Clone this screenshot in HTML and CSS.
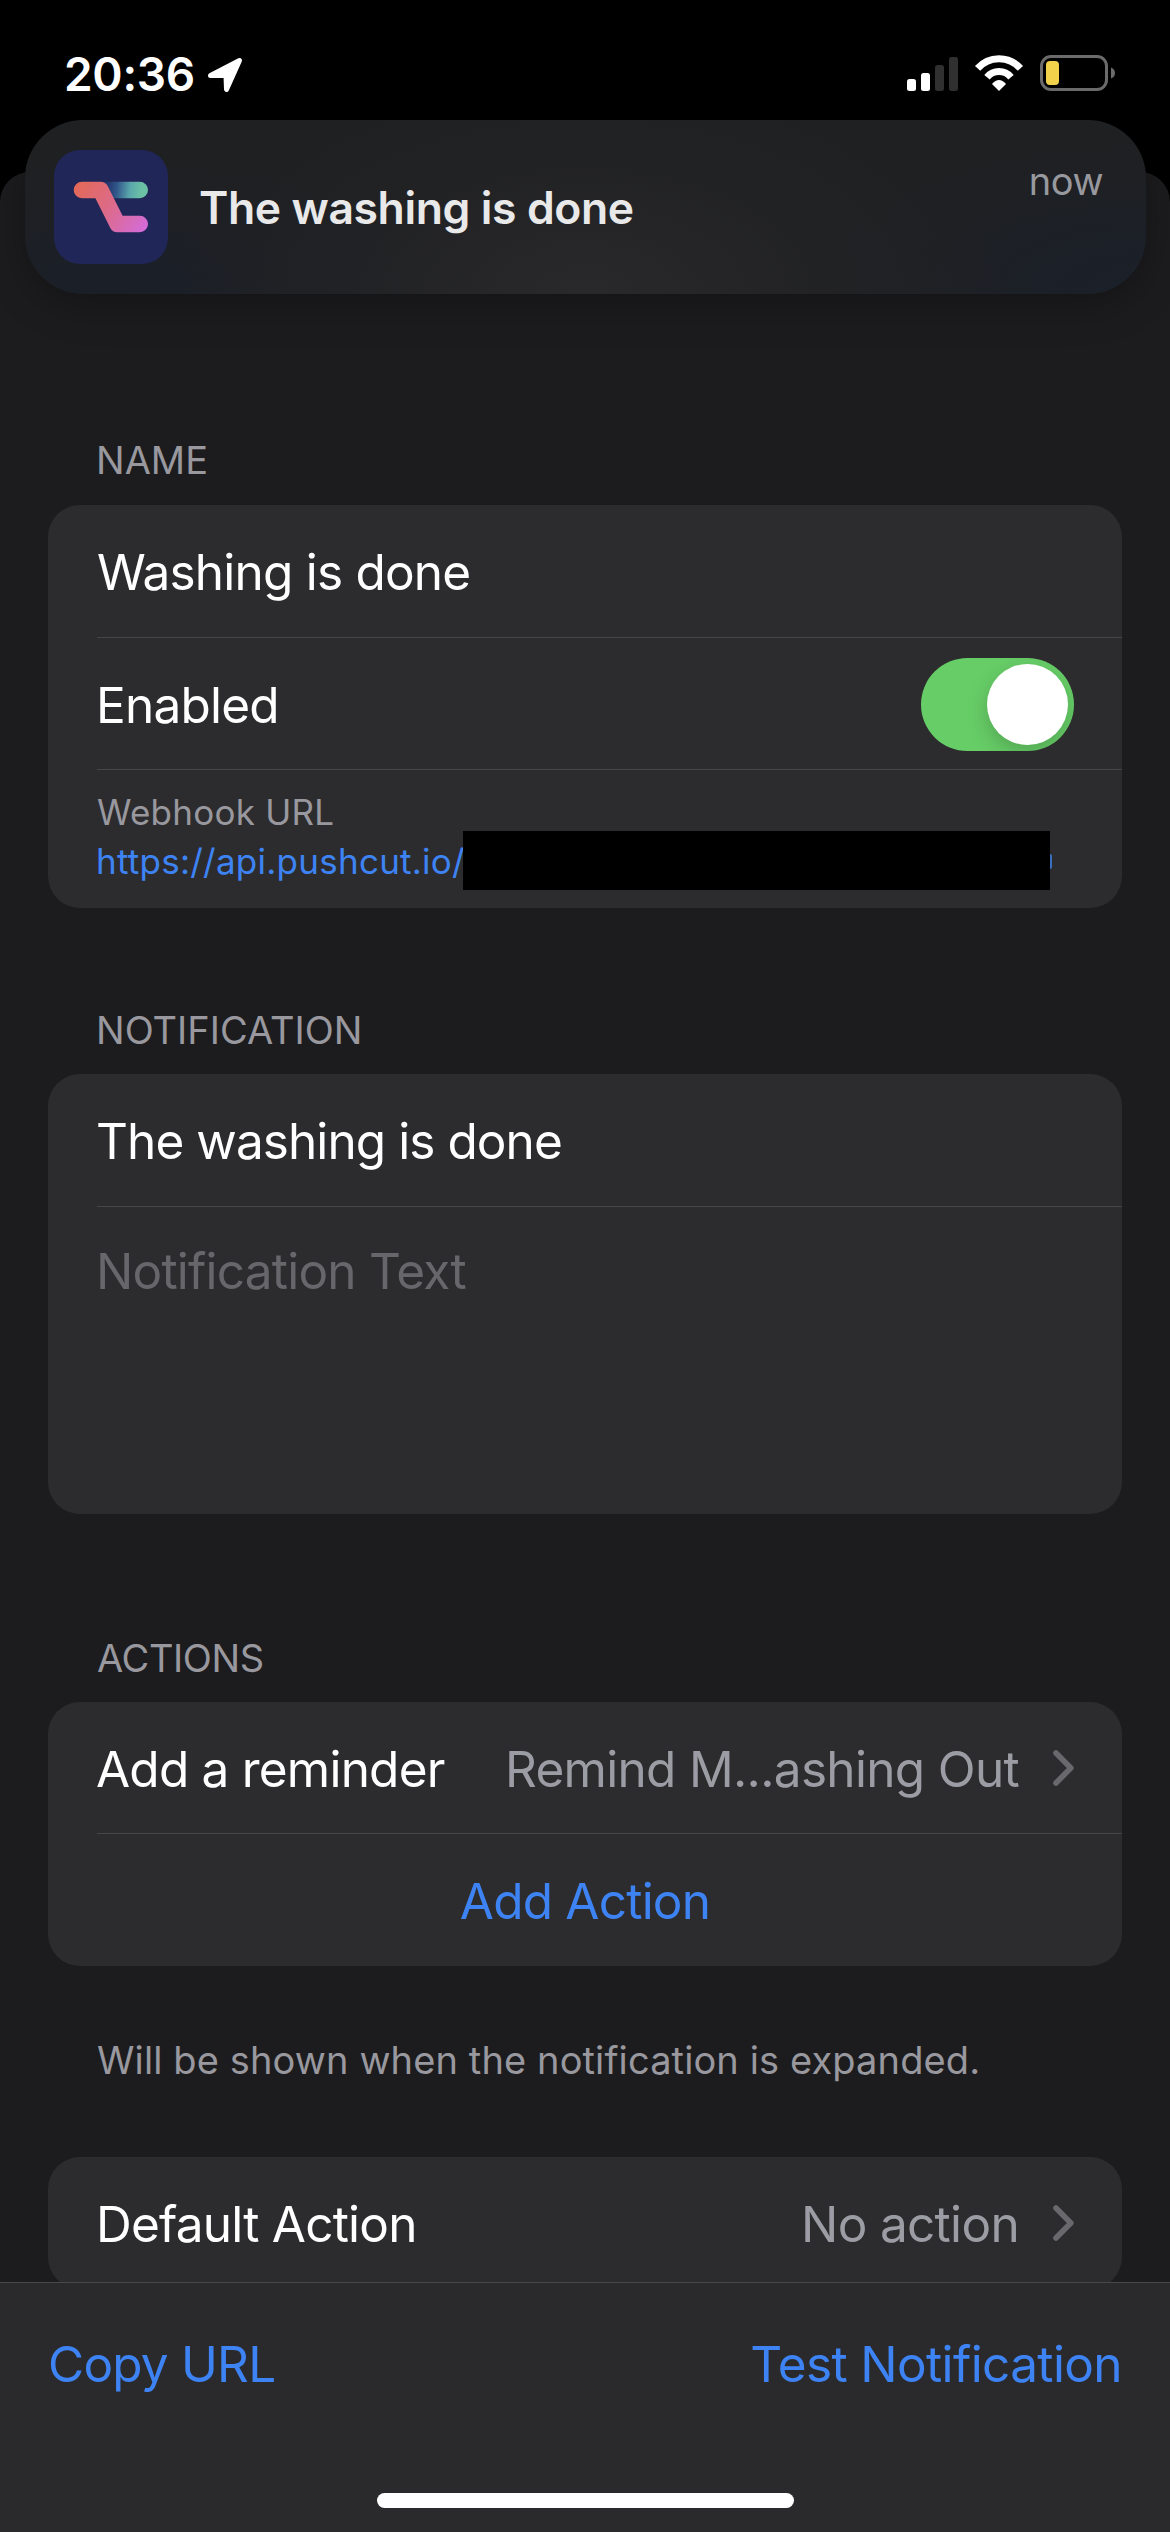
FILE: index.html
```html
<!DOCTYPE html>
<html lang="en">
<head>
<meta charset="utf-8">
<title>Washing is done</title>
<link rel="stylesheet" href="styles.css">
</head>
<body>
<div class="phone">
  <header class="status">
    <div class="status-left">
      <span class="time">20:36</span>
      <svg class="location" width="38" height="38" viewBox="0 0 38 38"><path d="M4.500 19.500 L33.500 4.500 L20.500 33.500 L20 19.500Z" fill="#fff" stroke="#fff" stroke-width="5" stroke-linejoin="round"/></svg>
    </div>
    <div class="status-right">
      <svg width="51" height="36" viewBox="0 0 51 36">
        <rect x="0" y="24" width="9" height="12" rx="2.500" fill="#fff"/>
        <rect x="14" y="18" width="9" height="18" rx="2.500" fill="#fff"/>
        <rect x="28" y="10" width="9" height="26" rx="2.500" fill="#303030"/>
        <rect x="42" y="2" width="9" height="34" rx="2.500" fill="#303030"/>
      </svg>
      <svg width="50" height="36" viewBox="0 0 50 36">
        <g fill="none" stroke="#fff" stroke-width="7">
          <path d="M3.600 13.400A28.400 28.400 0 0 1 46.400 13.400"/>
          <path d="M13 22.200A15.600 15.600 0 0 1 37 22.200"/>
        </g>
        <path d="M25 36L18 29Q25 21 32 29Z" fill="#fff"/>
      </svg>
      <svg width="76" height="36" viewBox="0 0 76 36">
        <rect x="1.500" y="1.500" width="65" height="33" rx="9.500" fill="none" stroke="#6b6b6b" stroke-width="3"/>
        <rect x="6" y="6" width="13" height="24" rx="4" fill="#f2d24b"/>
        <path d="M71 12.500Q75 14 75 18T71 23.500Z" fill="#6b6b6b"/>
      </svg>
    </div>
  </header>

  <main class="sheet">
    <section>
      <h2>NAME</h2>
      <div class="card">
        <div class="row">Washing is done</div>
        <div class="row">
          <span>Enabled</span>
          <span class="toggle"><span class="knob"></span></span>
        </div>
        <div class="row webhook">
          <div class="small">Webhook URL</div>
          <div class="url"><span class="small link">https://api.pushcut.io/</span><span class="redacted"></span><span class="edge"></span></div>
        </div>
      </div>
    </section>

    <section class="notification">
      <h2>NOTIFICATION</h2>
      <div class="card">
        <div class="row"><span class="title">The washing is done</span></div>
        <div class="row placeholder"><span>Notification Text</span></div>
      </div>
    </section>

    <section class="actions">
      <h2 class="flush">ACTIONS</h2>
      <div class="card">
        <div class="row">
          <span>Add a reminder</span>
          <span class="value">Remind M...ashing Out<svg class="chevron" width="24" height="38" viewBox="0 0 24 38"><path d="M4 4L18.800 19L4 34" fill="none" stroke="#68686d" stroke-width="5.600" stroke-linecap="round" stroke-linejoin="round"/></svg></span>
        </div>
        <div class="row add link">Add Action</div>
      </div>
      <p>Will be shown when the notification is expanded.</p>
    </section>

    <section class="default">
      <div class="card">
        <div class="row">
          <span>Default Action</span>
          <span class="value">No action<svg class="chevron" width="24" height="38" viewBox="0 0 24 38"><path d="M4 4L18.800 19L4 34" fill="none" stroke="#68686d" stroke-width="5.600" stroke-linecap="round" stroke-linejoin="round"/></svg></span>
        </div>
      </div>
    </section>
  </main>

  <footer class="toolbar">
    <div class="buttons"><span>Copy URL</span><span class="test">Test Notification</span></div>
    <div class="home"></div>
  </footer>

  <aside class="banner">
    <svg class="logo" width="114" height="114" viewBox="0 0 114 114">
      <defs>
        <linearGradient id="teal" gradientUnits="userSpaceOnUse" x1="54" y1="38" x2="88" y2="42"><stop offset="0" stop-color="#24386f"/><stop offset=".25" stop-color="#31568a"/><stop offset=".65" stop-color="#5ba8ac"/><stop offset="1" stop-color="#6cc2a4"/></linearGradient>
        <linearGradient id="pink" gradientUnits="userSpaceOnUse" x1="24" y1="36" x2="90" y2="80"><stop offset="0" stop-color="#e2695a"/><stop offset=".5" stop-color="#dc6b8c"/><stop offset="1" stop-color="#d46bd8"/></linearGradient>
      </defs>
      <rect width="114" height="114" rx="26" fill="#202657"/>
      <path d="M50 40H85.800" stroke="url(#teal)" stroke-width="16.400" stroke-linecap="round"/>
      <path d="M27.900 40H46.500L63.500 74H85.800" fill="none" stroke="url(#pink)" stroke-width="16.400" stroke-linecap="round" stroke-linejoin="round"/>
    </svg>
    <strong>The washing is done</strong>
    <span class="when">now</span>
  </aside>
</div>
</body>
</html>
```
FILE: styles.css
```css
* {
  box-sizing: border-box;
}

body {
  margin: 0;
  background: #000;
}

.phone {
  position: relative;
  display: flex;
  flex-direction: column;
  width: 1170px;
  height: 2532px;
  overflow: hidden;
  background: #000;
  color: #fff;
  font: 400 49.5px/60px Inter, sans-serif;
  letter-spacing: -0.78px;
  white-space: nowrap;
}

/* Status bar */
.status {
  display: flex;
  justify-content: space-between;
  height: 172px;
  padding: 46px 54px 0 64px;
}

.status-left,
.status-right {
  display: flex;
  align-items: flex-start;
}

.status-left {
  gap: 11px;
}

.time {
  font-size: 46px;
  font-weight: 600;
  line-height: 56px;
  letter-spacing: -0.3px;
}

.location {
  margin-top: 10px;
}

.status-right {
  gap: 16px;
  padding-top: 9px;
}

/* Scrolling sheet */
.sheet {
  flex: 1;
  min-height: 0;
  overflow: hidden;
  padding: 265px 48px 0;
  border-radius: 30px 30px 0 0;
  background: #1c1c1e;
}

h2,
p {
  margin: 0;
  color: #98989e;
  font-size: 38px;
  font-weight: 400;
  line-height: 46px;
}

h2 {
  margin: 0 0 22px 48px;
  letter-spacing: 0;
}

h2.flush {
  margin-left: 49px;
  letter-spacing: -0.4px;
}

p {
  margin: 71px 0 0 49px;
  letter-spacing: 0.12px;
}

.card {
  overflow: hidden;
  border-radius: 32px;
  background: #2c2c2e;
}

.row {
  display: flex;
  align-items: center;
  justify-content: space-between;
  height: 132px;
  margin-left: 49px;
  padding: 2px 48px 0 0;
}

.row + .row {
  border-top: 1px solid #464649;
}

.row > span:first-child {
  margin-left: -1px;
}

.title {
  letter-spacing: -0.92px;
}

.toggle {
  display: flex;
  justify-content: flex-end;
  width: 153px;
  height: 93px;
  padding: 6px;
  border-radius: 47px;
  background: #67ce67;
  overflow: hidden;
}

.knob {
  width: 81px;
  height: 81px;
  border-radius: 50%;
  background: #fff;
  box-shadow: 0 8px 22px rgba(0, 0, 0, 0.2);
}

.row.webhook {
  display: block;
  height: 139px;
  padding: 18px 0 0;
}

.small {
  font-size: 35px;
  line-height: 49px;
  letter-spacing: 0.25px;
}

.webhook > .small {
  color: #98989e;
}

.link {
  color: #3e83f3;
}

.url {
  display: flex;
  align-items: center;
  height: 49px;
}

.url .link {
  width: 367px;
  margin-left: -1px;
}

.redacted {
  flex: none;
  width: 587px;
  height: 59px;
  margin: -7px 0 -5px;
  background: #000;
}

.edge {
  width: 2px;
  height: 15px;
  border-radius: 0 2px 2px 0;
  background: #3a6fc0;
}

.notification {
  margin-top: 99px;
}

.notification h2,
.actions h2 {
  margin-bottom: 21px;
}

.row.placeholder {
  align-items: flex-start;
  height: 308px;
  padding-top: 34px;
  color: #67676b;
}

.actions {
  margin-top: 121px;
}

.actions .row {
  height: 131px;
}

.actions .row.add {
  justify-content: center;
  height: 133px;
  padding-right: 49px;
}

.value {
  display: flex;
  align-items: center;
  color: #9c9ca4;
  letter-spacing: -0.68px;
}

.chevron {
  margin: -2px -2px 0 33px;
}

.default {
  margin-top: 74px;
}

/* Bottom toolbar */
.toolbar {
  display: flex;
  flex-direction: column;
  align-items: center;
  justify-content: space-between;
  height: 250px;
  padding: 51px 48px 24px;
  border-top: 1px solid #48484a;
  background: #2a2a2c;
}

.buttons {
  display: flex;
  align-self: stretch;
  justify-content: space-between;
  color: #3e83f3;
}

.test {
  letter-spacing: -0.62px;
}

.home {
  width: 417px;
  height: 15px;
  border-radius: 8px;
  background: #fff;
}

/* Notification banner, floating above the sheet */
.banner {
  position: absolute;
  top: 120px;
  left: 25px;
  display: flex;
  align-items: flex-start;
  width: 1121px;
  height: 174px;
  padding: 30px 43px 30px 29px;
  border-radius: 58px;
  background:
    radial-gradient(ellipse 420px 230px at 50% 100%, #29292b, rgba(36, 36, 38, 0.6) 55%, transparent),
    radial-gradient(ellipse 330px 150px at 100% 100%, #1a202a, transparent),
    radial-gradient(ellipse 360px 130px at 8% 100%, #1a1f28, transparent),
    #1f2022;
  box-shadow: 0 10px 40px rgba(0, 0, 0, 0.28);
}

.logo {
  flex: none;
}

.banner strong {
  flex: 1;
  margin-left: 31px;
  color: #e9e9ea;
  font-size: 44.5px;
  font-weight: 600;
  line-height: 116px;
  letter-spacing: -0.4px;
}

.when {
  margin-top: 8px;
  color: #98999f;
  font-size: 38px;
  line-height: 46px;
  letter-spacing: -0.5px;
}
```
